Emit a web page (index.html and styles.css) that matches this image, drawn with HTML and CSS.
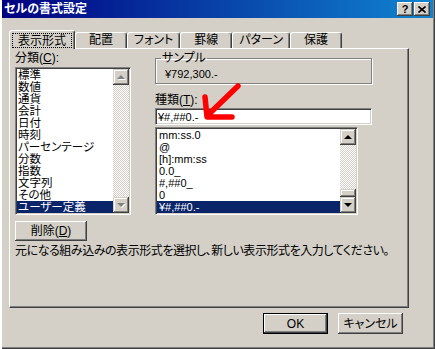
FILE: index.html
```html
<!DOCTYPE html>
<html lang="ja">
<head>
  <meta charset="UTF-8">
  <title>セルの書式設定</title>
  <link rel="stylesheet" href="styles.css">
</head>
<body>
  <div class="window">
    <div class="titlebar">
      <span class="title">セルの書式設定</span>
      <div class="title-buttons">
        <span class="tbtn help">?</span>
        <span class="tbtn close">
          <svg width="8" height="7" viewBox="0 0 8 7"><path d="M0.5 0.5L7.5 6.5M7.5 0.5L0.5 6.5" stroke="#000" stroke-width="1.6"/></svg>
        </span>
      </div>
    </div>

    <div class="client">
      <!-- tab strip -->
      <div class="tabs">
        <div class="tab active"><span class="focus">表示形式</span></div>
        <div class="tab">配置</div>
        <div class="tab">フォント</div>
        <div class="tab">罫線</div>
        <div class="tab">パターン</div>
        <div class="tab">保護</div>
      </div>

      <div class="panel">
        <div class="columns">
          <div class="col-left">
            <div class="label">分類(<u>C</u>):</div>
            <div class="listbox cat">
              <ul class="items">
                <li>標準</li>
                <li>数値</li>
                <li>通貨</li>
                <li>会計</li>
                <li>日付</li>
                <li>時刻</li>
                <li>パーセンテージ</li>
                <li>分数</li>
                <li>指数</li>
                <li>文字列</li>
                <li>その他</li>
                <li class="selected">ユーザー定義</li>
              </ul>
              <div class="scrollbar disabled">
                <div class="sbtn up"></div>
                <div class="track"></div>
                <div class="sbtn down"></div>
              </div>
            </div>
          </div>

          <div class="col-right">
            <fieldset class="sample">
              <legend>サンプル</legend>
              <div class="sample-value code">¥792,300.-</div>
            </fieldset>
            <div class="label type-label">種類(<u>T</u>):</div>
            <div class="textbox code">¥#,##0.-</div>
            <div class="listbox fmt">
              <ul class="items code">
                <li>mm:ss.0</li>
                <li>@</li>
                <li>[h]:mm:ss</li>
                <li>0.0_</li>
                <li>#,##0_</li>
                <li>0</li>
                <li class="selected">¥#,##0.-</li>
              </ul>
              <div class="scrollbar">
                <div class="sbtn up"></div>
                <div class="track"></div>
                <div class="thumb"></div>
                <div class="sbtn down"></div>
              </div>
            </div>
          </div>
        </div>

        <button class="btn del">削除(<u>D</u>)</button>
        <p class="desc">元になる組み込みの表示形式を選択し、新しい表示形式を入力してください。</p>
      </div>

      <div class="actions">
        <button class="btn ok">OK</button>
        <button class="btn">キャンセル</button>
      </div>
    </div>

    <!-- red annotation arrow -->
    <svg class="marker" width="45" height="45" viewBox="0 0 45 45">
      <path d="M38 6L9 34M5 17L7 37L32 37" fill="none" stroke="#f00" stroke-width="5.5" stroke-linecap="round" stroke-linejoin="round"/>
    </svg>
  </div>
</body>
</html>
```

FILE: styles.css
```css
* {
  box-sizing: border-box;
}
body {
  margin: 0;
  background: #d4d0c8;
  font-family: "Liberation Sans", "Noto Sans CJK JP", sans-serif;
  font-size: 12px;
  line-height: 12px;
  font-feature-settings: "palt";
  color: #000;
}
.window {
  position: relative;
  width: 435px;
  height: 349px;
  padding: 0 2px 2px 2px;
  background: #d4d0c8;
  box-shadow: inset 2px 0 #fff, inset -1px -1px #404040, inset -2px -2px #808080;
}

/* title bar */
.titlebar {
  height: 18px;
  display: flex;
  align-items: center;
  justify-content: space-between;
  padding: 0 3px 0 2px;
  background: linear-gradient(to right, #000080, #1084d0);
  color: #fff;
}
.title {
  font-weight: bold;
  font-size: 12px;
}
.title-buttons {
  display: flex;
  gap: 1px;
}
.tbtn {
  width: 16px;
  height: 14px;
  display: flex;
  align-items: center;
  justify-content: center;
  background: #d4d0c8;
  color: #000;
  font-weight: bold;
  font-size: 11px;
  box-shadow: inset -1px -1px #404040, inset 1px 1px #fff, inset -2px -2px #808080;
}

/* client area */
.client {
  padding: 12px 0 0 7px;
}
.tabs {
  display: flex;
  align-items: flex-end;
  height: 18px;
}
.tab {
  height: 16px;
  min-width: 52px;
  padding: 1px 6px 0;
  text-align: center;
  white-space: nowrap;
  border: 1px solid;
  border-bottom: 0;
  border-color: #fff #404040 transparent #fff;
  border-radius: 3px 3px 0 0;
  box-shadow: inset -1px 0 #808080;
  background: #d4d0c8;
}
.tab.active {
  position: relative;
  z-index: 1;
  height: 19px;
  margin-bottom: -1px;
  padding: 2px 2px 0;
}
.focus {
  display: block;
  height: 15px;
  padding: 1px 5px 0;
  border: 1px dotted #000;
}
.panel {
  width: 400px;
  height: 260px;
  padding: 3px 0 0 5px;
  border: 1px solid;
  border-color: #fff #404040 #404040 #fff;
  box-shadow: inset -1px -1px #808080;
}
.columns {
  display: flex;
  gap: 24px;
}
.col-left {
  width: 116px;
}
.col-right {
  width: 217px;
}
.label {
  height: 12px;
  margin-bottom: 3px;
  white-space: nowrap;
}
.code {
  font-size: 11px;
}

/* list boxes */
.listbox {
  display: flex;
  padding: 1px;
  background: #fff;
  border: 1px solid;
  border-color: #808080 #fff #fff #808080;
  box-shadow: inset 1px 1px #404040, inset -1px -1px #d4d0c8;
}
.listbox.cat {
  height: 148px;
}
.listbox.fmt {
  width: 203px;
  height: 88px;
  margin-top: 2px;
}
.items {
  flex: 1;
  list-style: none;
  margin: 0;
  padding: 0;
  overflow: hidden;
}
.items li {
  height: 12px;
  line-height: 12px;
  padding-left: 1px;
  white-space: nowrap;
}
.cat .items li {
  font-size: 11.5px;
}
.fmt .items li {
  padding-left: 2px;
}
.items li.selected {
  background: #0a246a;
  color: #fff;
}
.scrollbar {
  width: 16px;
  display: flex;
  flex-direction: column;
}
.sbtn, .thumb {
  background: #d4d0c8;
  box-shadow: inset -1px -1px #404040, inset 1px 1px #d4d0c8, inset -2px -2px #808080, inset 2px 2px #fff;
}
.sbtn {
  height: 16px;
  display: flex;
  align-items: center;
  justify-content: center;
}
.thumb {
  height: 8px;
}
.track {
  flex: 1;
  background: repeating-conic-gradient(#fff 0 25%, #d4d0c8 0 50%) 0 0 / 2px 2px;
}
.sbtn::before {
  content: "";
  border-left: 4px solid transparent;
  border-right: 4px solid transparent;
}
.sbtn.up::before {
  border-bottom: 4px solid #000;
}
.sbtn.down::before {
  border-top: 4px solid #000;
}
.disabled .sbtn.up::before {
  border-bottom-color: #808080;
  filter: drop-shadow(1px 1px 0 #fff);
}
.disabled .sbtn.down::before {
  border-top-color: #808080;
  filter: drop-shadow(1px 1px 0 #fff);
}

/* sample group */
.sample {
  margin: 0;
  padding: 0 4px 3px 5px;
  border: 1px solid #808080;
  box-shadow: inset 1px 1px #fff, 1px 1px #fff;
}
.sample legend {
  padding: 0 1px;
  line-height: 12px;
}
.sample-value {
  height: 16px;
  padding: 4px 0 0 4px;
}
.type-label {
  margin: 10px 0 2px;
}
.textbox {
  height: 17px;
  padding: 2px 2px;
  background: #fff;
  border: 1px solid;
  border-color: #808080 #fff #fff #808080;
  box-shadow: inset 1px 1px #404040, inset -1px -1px #d4d0c8;
  line-height: 12px;
}

/* buttons */
.btn {
  display: flex;
  align-items: center;
  justify-content: center;
  padding: 0;
  border: 0;
  background: #d4d0c8;
  color: #000;
  font: inherit;
  box-shadow: inset -1px -1px #404040, inset 1px 1px #fff, inset -2px -2px #808080;
}
.btn.del {
  width: 72px;
  height: 20px;
  margin-top: 6px;
}
.desc {
  margin: 4px 0 0;
  white-space: nowrap;
  letter-spacing: -0.45px;
}
.actions {
  display: flex;
  justify-content: flex-end;
  gap: 10px;
  width: 400px;
  padding-right: 6px;
  margin-top: 5px;
}
.actions .btn {
  width: 65px;
  height: 21px;
}
.btn.ok {
  box-shadow: inset 0 0 0 1px #000, inset -2px -2px #404040, inset 2px 2px #fff, inset -3px -3px #808080;
}

/* annotation */
.marker {
  position: absolute;
  left: 200px;
  top: 80px;
}
```
